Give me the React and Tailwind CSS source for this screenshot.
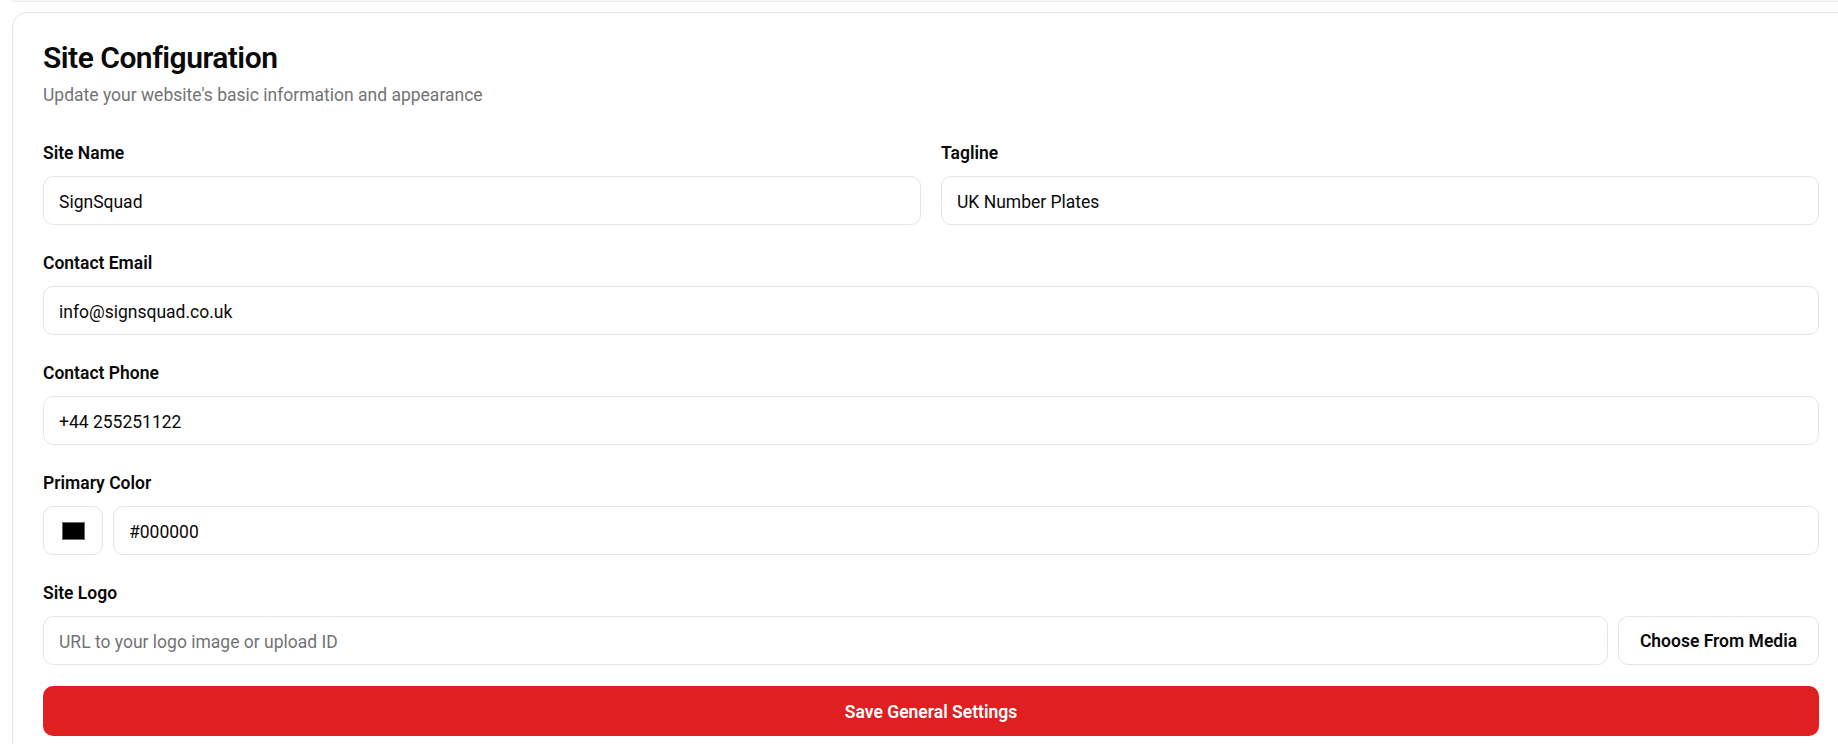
function Field({ label, children }) {
  return (
    <div className="flex flex-col">
      <label className="h-[20px] leading-[20px] text-[17.5px] font-semibold text-[#0a0a0a]">{label}</label>
      <div className="mt-[13px]">{children}</div>
    </div>
  );
}

function TextInput({ value, placeholder }) {
  return (
    <div className="flex h-[49px] w-full items-center rounded-[10px] border border-[#e5e5e5] bg-white px-[15px] pt-[4px] text-[17.5px] leading-[25px]">
      {value ? (
        <span className="text-[#0a0a0a]">{value}</span>
      ) : (
        <span className="text-[#737373]">{placeholder}</span>
      )}
    </div>
  );
}

export default function App() {
  return (
    <div className="min-h-[744px] w-full overflow-hidden bg-white" style={{ fontFamily: 'Roboto, "Noto Sans", sans-serif' }}>
      <div className="ml-[12px] h-[2px] rounded-bl-[4px] border-b border-l border-[#ececec] bg-[#f5f5f5]"></div>
      <div className="ml-[12px] mt-[10px] w-[1840px] rounded-[15px] border border-[#e5e5e5] bg-white px-[30px] pt-[27px] pb-[30px]">
        <h2 className="h-[36px] text-[30px] font-semibold leading-[36px] tracking-[-0.5px] text-[#0a0a0a]">Site Configuration</h2>
        <p className="mt-[7px] text-[17.5px] leading-[25px] text-[#737373]">Update your website's basic information and appearance</p>

        <div className="mt-[35px] flex w-[1776px] flex-col gap-[28px]">
          <div className="grid grid-cols-2 gap-[20px]">
            <Field label="Site Name">
              <TextInput value="SignSquad" />
            </Field>
            <Field label="Tagline">
              <TextInput value="UK Number Plates" />
            </Field>
          </div>
          <Field label="Contact Email">
            <TextInput value="info@signsquad.co.uk" />
          </Field>
          <Field label="Contact Phone">
            <TextInput value="+44 255251122" />
          </Field>
          <Field label="Primary Color">
            <div className="flex gap-[10px]">
              <div className="flex h-[49px] w-[60px] shrink-0 items-center justify-center rounded-[10px] border border-[#e5e5e5] bg-white">
                <div className="h-[18px] w-[23px] border border-[#6b6b6b] bg-black"></div>
              </div>
              <TextInput value="#000000" />
            </div>
          </Field>
          <Field label="Site Logo">
            <div className="flex gap-[10px]">
              <div className="flex-1">
                <TextInput placeholder="URL to your logo image or upload ID" />
              </div>
              <button className="flex h-[49px] w-[201px] shrink-0 items-center justify-center rounded-[10px] border border-[#e5e5e5] bg-white pt-[2px] text-[17.5px] font-semibold text-[#0a0a0a]">
                Choose From Media
              </button>
            </div>
          </Field>
        </div>

        <button className="mt-[21px] flex h-[50px] w-[1776px] items-center justify-center rounded-[10px] bg-[#e02020] pt-[2px] text-[17.5px] font-semibold text-white">
          Save General Settings
        </button>
      </div>
    </div>
  );
}
